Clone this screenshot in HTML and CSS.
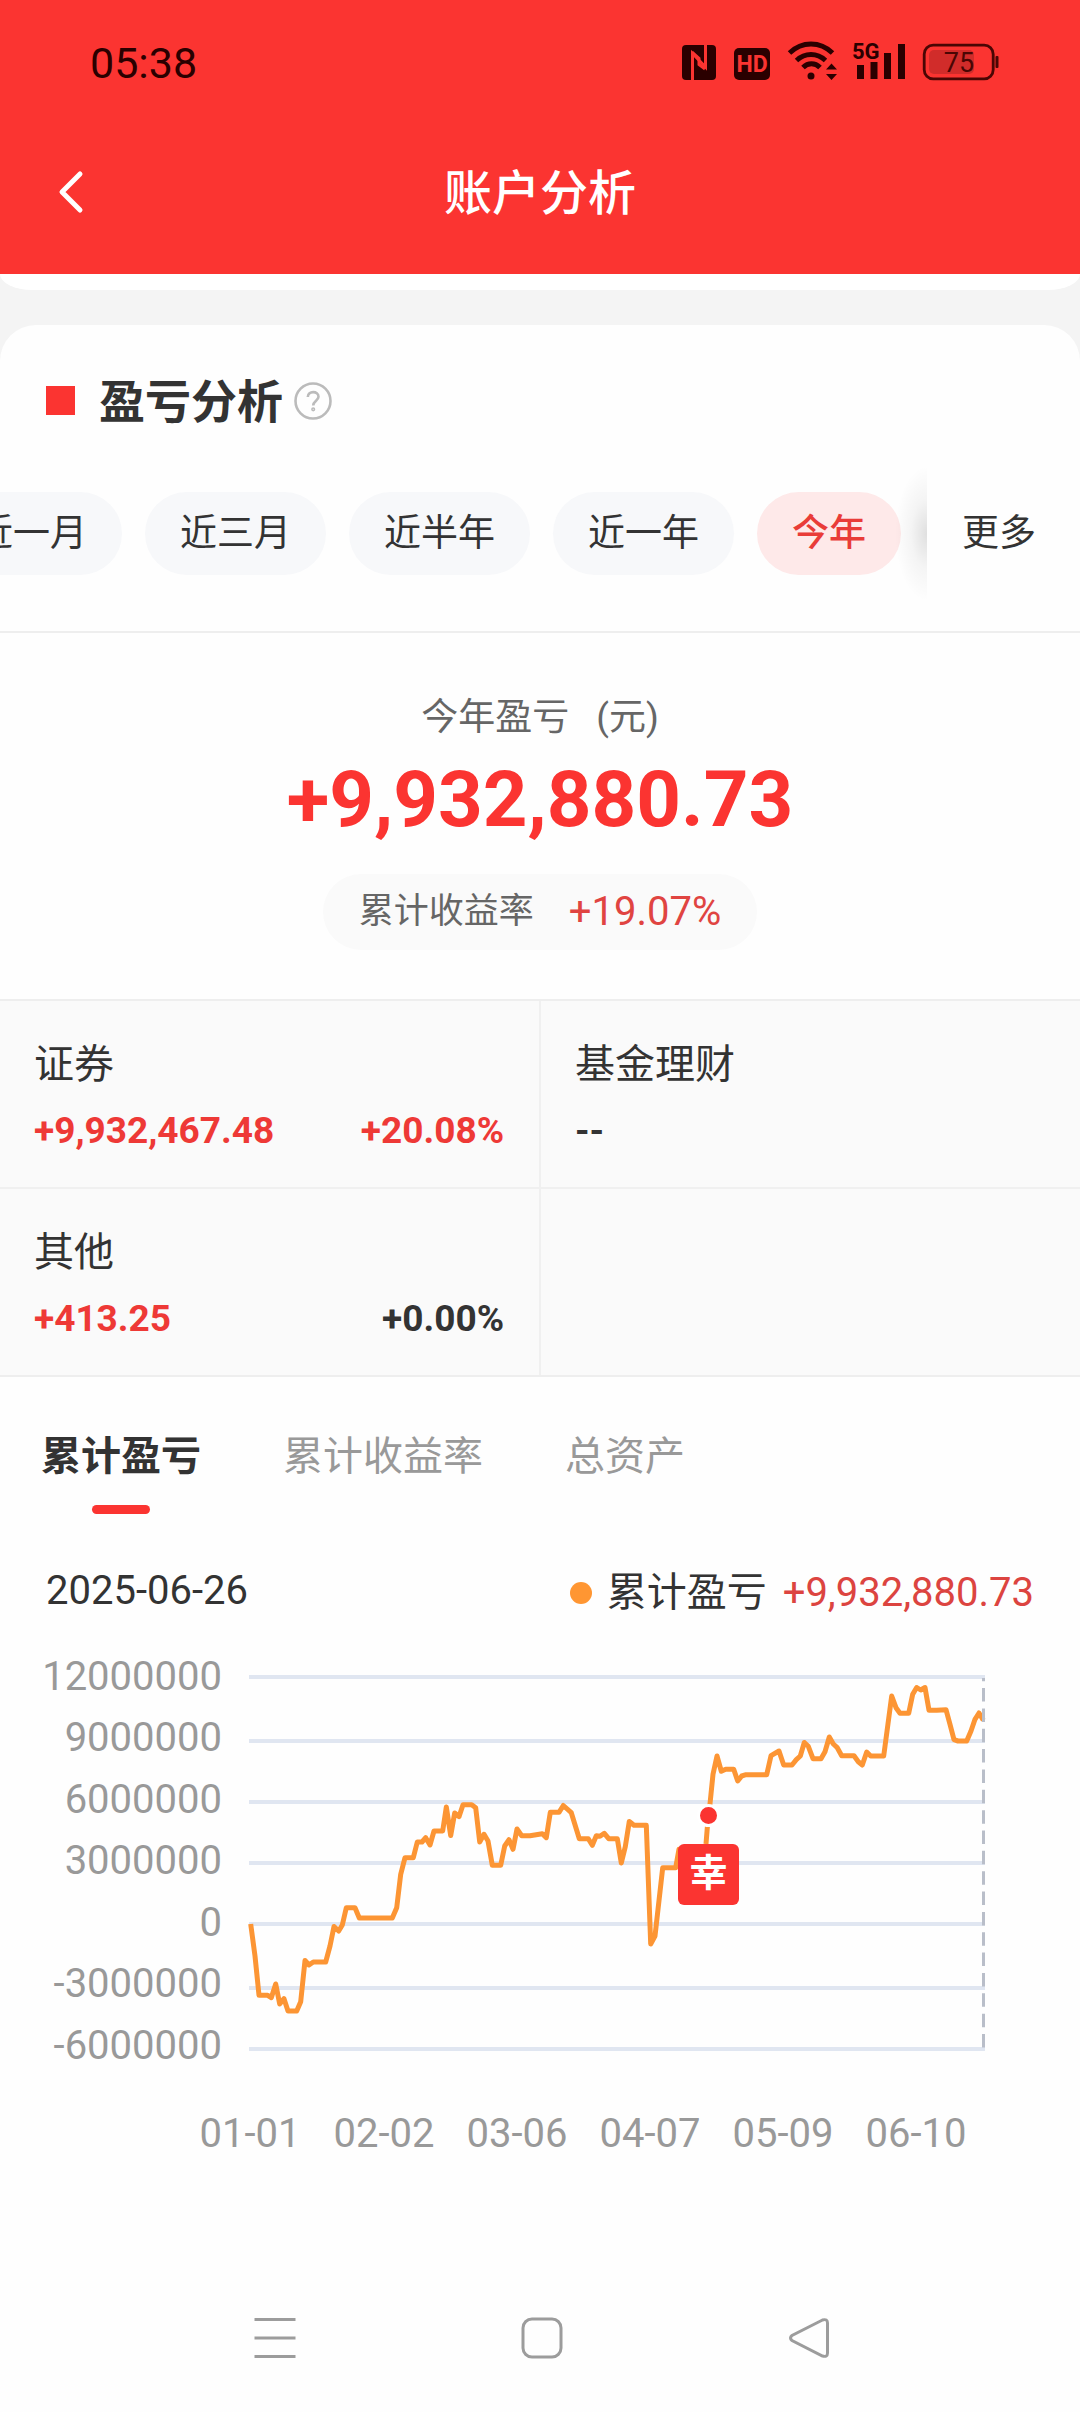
FILE: index.html
```html
<!DOCTYPE html>
<html lang="zh-CN">
<head>
<meta charset="utf-8">
<meta name="viewport" content="width=device-width, initial-scale=1">
<title>账户分析</title>
<link rel="stylesheet" href="styles.css">
</head>
<body>
<header class="top">
  <div class="status">
    <time class="clock">05:38</time>
    <div class="status-icons">
      <svg width="34" height="42" viewBox="0 0 34 42" role="img" aria-label="NFC">
        <rect y="5" width="34" height="35" rx="4" fill="#2a0000"/>
        <path d="M10.500 40V13.500L23.500 27V5" fill="none" stroke="#fb3431" stroke-width="3"/>
        <path d="M10 12L17 18.500V24.500L23 29" fill="none" stroke="#fb3431" stroke-width="3"/>
      </svg>
      <svg width="36" height="42" viewBox="0 0 36 42" role="img" aria-label="HD">
        <rect y="8" width="36" height="32" rx="5" fill="#2a0000"/>
        <text x="18" y="32" class="ic-hd">HD</text>
      </svg>
      <svg width="47" height="42" viewBox="0 0 47 42" role="img" aria-label="Wi-Fi">
        <g fill="none" stroke="#2a0000" stroke-width="5">
          <path d="M1.500 13C14 1 32 1 44.500 13"/>
          <path d="M8.500 20.500C17 12.500 29 12.500 37.500 20.500"/>
          <path d="M15 27.500C20 22.500 27 22.500 32 27.500"/>
        </g>
        <circle cx="23" cy="36" r="3.500" fill="#2a0000"/>
        <path d="M38 29.500L43.500 23.500L49 29.500ZM38 34L43.500 40L49 34Z" fill="#2a0000"/>
      </svg>
      <svg width="52" height="42" viewBox="0 0 52 42" role="img" aria-label="5G">
        <text x="-1" y="19" class="ic-5g">5G</text>
        <path d="M4 25h7v14H4zM17.500 22h7v17h-7zM31 13h7v26h-7zM45 4h7v35h-7z" fill="#2a0000"/>
      </svg>
      <svg width="75" height="42" viewBox="0 0 75 42" role="img" aria-label="75%">
        <rect x="1.200" y="5.200" width="69" height="33.600" rx="9" fill="none" stroke="#4a0604" stroke-width="2.800"/>
        <rect x="6" y="10" width="45" height="24" rx="5" fill="#d12c2a"/>
        <rect x="72.500" y="16" width="3" height="12" rx="1" fill="#4a0604"/>
        <text x="36" y="32" class="ic-bat">75</text>
      </svg>
    </div>
  </div>
  <div class="titlebar">
    <button class="back" type="button" aria-label="返回">
      <svg width="28" height="44" viewBox="0 0 28 44"><path d="M24 4L6 22L24 40" fill="none" stroke="#fff" stroke-width="5" stroke-linecap="round" stroke-linejoin="round"/></svg>
    </button>
    <h1>账户分析</h1>
  </div>
</header>

<div class="prev-card"></div>

<main class="card">
  <div class="card-head">
    <span class="square"></span>
    <h2>盈亏分析</h2>
    <button class="help" type="button" aria-label="说明">
      <svg width="38" height="38" viewBox="0 0 38 38" fill="none" stroke="#bbb" stroke-width="2.600"><circle cx="19" cy="19" r="17.500"/><path d="M13.800 15C13.800 8.500 24.500 8.500 24.500 14.800C24.500 18.500 19.200 19 19.200 23.500"/><circle cx="19.200" cy="27.300" r="0.800"/></svg>
    </button>
  </div>

  <div class="ranges">
    <div class="chips">
      <button type="button" class="chip">近一月</button>
      <button type="button" class="chip">近三月</button>
      <button type="button" class="chip">近半年</button>
      <button type="button" class="chip">近一年</button>
      <button type="button" class="chip active">今年</button>
    </div>
    <button type="button" class="more">更多</button>
  </div>

  <section class="summary">
    <p class="summary-label"><span>今年盈亏</span><span>(元)</span></p>
    <p class="total">+9,932,880.73</p>
    <p class="rate"><span class="rate-label">累计收益率</span><span class="rate-value">+19.07%</span></p>
  </section>

  <section class="breakdown">
    <div class="cell">
      <h3>证券</h3>
      <p class="figures up"><span>+9,932,467.48</span><span>+20.08%</span></p>
    </div>
    <div class="cell">
      <h3>基金理财</h3>
      <p class="figures"><span>--</span></p>
    </div>
    <div class="cell">
      <h3>其他</h3>
      <p class="figures"><span class="up">+413.25</span><span>+0.00%</span></p>
    </div>
    <div class="cell"></div>
  </section>

  <nav class="tabs">
    <button type="button" class="tab current">累计盈亏</button>
    <button type="button" class="tab">累计收益率</button>
    <button type="button" class="tab">总资产</button>
  </nav>

  <div class="legend">
    <time>2025-06-26</time>
    <p class="series"><span class="dot"></span><span class="series-name">累计盈亏</span><span class="series-value">+9,932,880.73</span></p>
  </div>

  <svg class="chart" viewBox="0 0 1080 530" role="img" aria-label="累计盈亏走势">
    <path class="grid" d="M249 36H985M249 100H985M249 161H985M249 222H985M249 283H985M249 347H985M249 408H985"/>
    <g class="y-axis">
      <text x="222" y="49">12000000</text>
      <text x="222" y="110">9000000</text>
      <text x="222" y="172">6000000</text>
      <text x="222" y="233">3000000</text>
      <text x="222" y="295">0</text>
      <text x="222" y="356">-3000000</text>
      <text x="222" y="418">-6000000</text>
    </g>
    <g class="x-axis">
      <text x="250" y="506">01-01</text>
      <text x="384" y="506">02-02</text>
      <text x="517" y="506">03-06</text>
      <text x="650" y="506">04-07</text>
      <text x="783" y="506">05-09</text>
      <text x="916" y="506">06-10</text>
    </g>
    <polyline class="line" points="250.700,283 255,315 259,354.300 267.700,354.300 271.300,356.700 275.700,343 279.700,363 284,357.700 288,370 296.700,370 300.700,360.700 305,319.500 309,324 313.300,321 325.700,321 330,305 334,285.500 338.700,290 342.300,284 346.300,266.700 355,266.700 359.300,277 392.300,277 396.700,266.700 400.700,233.300 405,216.700 413.300,216.700 417.300,201 422,201 425.700,196.700 430,204 434,190 442.700,190 446.300,166 450.700,194.500 454.700,172 459,175.700 463,163.700 471.700,163.700 475.700,166.700 479.700,201 484,193.300 488,200 492.300,224.300 500.700,224.300 504.700,205 509,198.700 513,208.300 517,188 521.700,194.700 530,194.700 542.300,192.700 546.300,196.700 550.300,171.300 559,171.300 563.300,164.500 571.300,171.700 579.300,197.700 588.300,197.700 592.300,204.300 596.300,194.700 600,195.300 604.300,192.300 608.700,197.700 617.300,197.700 621.300,222 625.300,205.700 629.300,180.500 634,184.300 646.300,184.300 650.700,303 655,295 662.700,226.700 675.700,226.700 679,208.300 704,222 706,203 707.300,186.700 710,162.700 713,133.300 717,115 721.300,130.300 725.700,128.300 733.700,128.300 737.700,140 741.700,135 746,133.700 766.700,133.700 771,114.700 779,110 783.700,124 792,124 796.300,118.700 800.300,115 804.300,101.500 808.300,105.300 813,117.700 821,117.700 825,110.700 829.300,96 833.300,103 837,106.300 841.700,114.700 854,114.700 858.300,120.700 862.300,124 866.700,111 870.700,115 883.700,115 887.700,85 891.700,55 896,66.700 900,72.300 908.700,72.300 912.700,53.300 916.700,46.500 920.700,49 925,46.500 929,69.300 936.700,69.300 946,68.700 950,83.300 954,98.700 958,100 966.700,100 971,90 975,78.300 979,72 983.300,79.300"/>
    <path class="cursor" d="M983.500 406.500V37"/>
    <circle cx="708.500" cy="174.500" r="10" fill="#fb3431" stroke="#fff" stroke-width="3"/>
    <rect x="678" y="203" width="61" height="61" rx="6" fill="#fb3431"/>
    <text class="badge" x="708.500" y="245">幸</text>
  </svg>
</main>

<nav class="sysnav">
  <button type="button" aria-label="最近任务"><svg width="42" height="42" viewBox="0 0 42 42"><path d="M0.500 2.500H41.500M0.500 21H41.500M0.500 39.500H41.500"/></svg></button>
  <button type="button" aria-label="主页"><svg width="42" height="42" viewBox="0 0 42 42"><rect x="2" y="2" width="38" height="38" rx="9"/></svg></button>
  <button type="button" aria-label="返回"><svg width="42" height="42" viewBox="0 0 42 42"><path d="M34.500 3L4 18.500Q1 21 4 23.500L34.500 39Q39.500 40.500 39.500 36V6Q39.500 1.500 34.500 3Z"/></svg></button>
</nav>
</body>
</html>
```
FILE: styles.css
```css
* { box-sizing: border-box; }

body {
  margin: 0;
  min-height: 100vh;
  display: flex;
  flex-direction: column;
  background: #f4f4f4;
  color: #333;
  font-family: Roboto, "Noto Sans CJK SC", sans-serif;
  font-size: 40px;
  line-height: 48px;
}

h1, h2, h3, p { margin: 0; font-weight: 400; font-size: inherit; }

button {
  padding: 0;
  border: 0;
  background: none;
  color: inherit;
  font: inherit;
  white-space: nowrap;
}

svg { display: block; }

/* Red header */
.top { background: #fb3431; }

.status {
  display: flex;
  justify-content: space-between;
  align-items: center;
  height: 110px;
  padding: 12px 82px 0 90px;
  color: #2a0000;
}

.clock { padding-top: 4px; font-size: 43px; }
.status-icons { display: flex; gap: 18px; }
.status-icons svg { overflow: visible; }

.ic-hd { font: 700 23px Roboto, sans-serif; fill: #fb3431; text-anchor: middle; }
.ic-5g { font: 700 22px Roboto, sans-serif; fill: #2a0000; }
.ic-bat { font: 400 27px Roboto, sans-serif; fill: #4a0604; text-anchor: middle; }

.titlebar {
  display: grid;
  grid-template-columns: 140px 1fr 140px;
  align-items: center;
  height: 164px;
  color: #fff;
}

.back { padding-left: 56px; }

h1 {
  padding-top: 3px;
  font-size: 48px;
  font-weight: 500;
  line-height: 60px;
  text-align: center;
}

/* Cards */
.prev-card {
  height: 16px;
  margin-bottom: 35px;
  background: #fff;
  border-radius: 0 0 32px 32px / 0 0 16px 16px;
}

.card {
  flex: 1;
  background: #fefefe;
  border-radius: 36px 36px 0 0;
}

.card-head {
  display: flex;
  align-items: center;
  height: 151px;
  padding: 0 46px;
}

.square {
  width: 29px;
  height: 29px;
  margin-right: 24px;
  background: #fb3431;
}

h2 { padding-top: 3px; font-size: 46px; font-weight: 700; margin-right: 11px; }

/* Period chips */
.ranges {
  display: flex;
  align-items: center;
  padding-bottom: 40px;
  border-bottom: 2px solid #eee;
  font-size: 37px;
}

.chips {
  flex: 1;
  min-width: 0;
  display: flex;
  justify-content: flex-end;
  gap: 23px;
  padding-right: 26px;
  overflow: hidden;
}

.chip {
  flex: none;
  height: 83px;
  padding: 0 35px;
  border-radius: 42px;
  background: #f7f8fa;
}

.chip.active { background: #fee9e9; color: #e93c38; font-weight: 500; }

.more {
  position: relative;
  width: 153px;
  height: 115px;
  padding-left: 35px;
  background: #fefefe;
  text-align: left;
}

.more::before {
  content: "";
  position: absolute;
  right: 100%;
  top: -10px;
  bottom: -10px;
  width: 32px;
  background: radial-gradient(farthest-side at 100% 50%, rgba(0, 0, 0, 0.12), rgba(0, 0, 0, 0.04) 50%, transparent);
}

/* Headline figure */
.summary {
  display: flex;
  flex-direction: column;
  align-items: center;
  padding: 61px 0 49px;
}

.summary-label { display: flex; gap: 27px; color: #666; font-size: 37px; }

.total {
  margin: 11px 0 27px;
  color: #fb3431;
  font-size: 78px;
  font-weight: 700;
  line-height: 94px;
}

.rate {
  display: flex;
  align-items: center;
  gap: 35px;
  height: 76px;
  padding: 0 36px;
  border-radius: 38px;
  background: #fafafa;
}

.rate-label { color: #666; font-size: 35px; }
.rate-value { color: #e04441; }

/* Breakdown by account type */
.breakdown {
  display: grid;
  grid-template-columns: 1fr 1fr;
  gap: 2px;
  border-top: 2px solid #eee;
  border-bottom: 2px solid #eee;
  background: #f0f0f0;
}

.cell {
  min-height: 186px;
  padding: 40px 35px 32px 34px;
  background: #fafafa;
}

.figures {
  display: flex;
  justify-content: space-between;
  margin-top: 18px;
  font-size: 37px;
  font-weight: 700;
}

.up { color: #ee3936; }

/* Chart tabs */
.tabs {
  display: flex;
  gap: 82px;
  padding: 56px 41px 0;
  color: #999;
}

.tab {
  display: flex;
  flex-direction: column;
  align-items: center;
}

.tab.current { color: #333; font-weight: 700; }

.tab.current::after {
  content: "";
  width: 58px;
  height: 9px;
  margin-top: 24px;
  border-radius: 5px;
  background: #fb3431;
}

.legend {
  display: flex;
  justify-content: space-between;
  padding: 53px 46px 0;
}

.series { display: flex; align-items: center; padding-top: 2px; }
.dot { width: 22px; height: 22px; border-radius: 50%; background: #ff9632; }
.series-name { margin: 0 16px 0 15px; }
.series-value { color: #dc4440; }

.chart { width: 100%; height: auto; margin-top: 24px; }
.chart text { font-size: 40px; fill: #999; }
.y-axis { text-anchor: end; }
.x-axis { text-anchor: middle; }
.grid { stroke: #e0e6f1; stroke-width: 4; }
.line { fill: none; stroke: #fc9534; stroke-width: 5; stroke-linejoin: round; }
.cursor { stroke: #b9bec9; stroke-width: 3; stroke-dasharray: 13.5 6.85; }
.chart .badge { fill: #fff; font-size: 38px; font-weight: 700; text-anchor: middle; }

/* System navigation */
.sysnav {
  display: grid;
  grid-template-columns: repeat(3, 1fr);
  height: 148px;
  padding: 0 138px 0 142px;
  background: #fefefe;
}

.sysnav button { display: flex; align-items: center; justify-content: center; }
.sysnav svg { fill: none; stroke: #9c9c9c; stroke-width: 3; }
```
